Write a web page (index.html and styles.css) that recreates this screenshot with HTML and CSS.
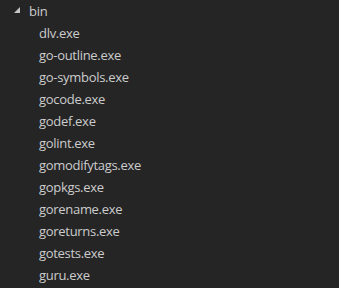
FILE: index.html
```html
<!DOCTYPE html>
<html lang="en">
<head>
  <meta charset="UTF-8">
  <title>Explorer</title>
  <link rel="stylesheet" href="styles.css">
</head>
<body>
  <div class="tree">
    <div class="row folder">
      <svg class="twisty" width="6" height="6" viewBox="0 0 6 6"><polygon points="6,0 6,6 0,6" fill="#c5c5c5"/></svg>
      <span>bin</span>
    </div>
    <div class="row file">dlv.exe</div>
    <div class="row file">go-outline.exe</div>
    <div class="row file">go-symbols.exe</div>
    <div class="row file">gocode.exe</div>
    <div class="row file">godef.exe</div>
    <div class="row file">golint.exe</div>
    <div class="row file">gomodifytags.exe</div>
    <div class="row file">gopkgs.exe</div>
    <div class="row file">gorename.exe</div>
    <div class="row file">goreturns.exe</div>
    <div class="row file">gotests.exe</div>
    <div class="row file">guru.exe</div>
  </div>
</body>
</html>
```

FILE: styles.css
```css
* {
  margin: 0;
  padding: 0;
  box-sizing: border-box;
}

body {
  background-color: #252526;
  font-family: "Open Sans", "Noto Sans", sans-serif;
  font-size: 13px;
  letter-spacing: -0.3px;
  color: #cccccc;
  width: 339px;
  height: 288px;
  overflow: hidden;
}

.tree {
  display: flex;
  flex-direction: column;
}

.row {
  height: 22px;
  display: flex;
  align-items: center;
  white-space: nowrap;
}

.folder {
  padding-left: 14px;
  gap: 9px;
}

.twisty {
  margin-top: -2px;
}

.file {
  padding-left: 39px;
}
```
